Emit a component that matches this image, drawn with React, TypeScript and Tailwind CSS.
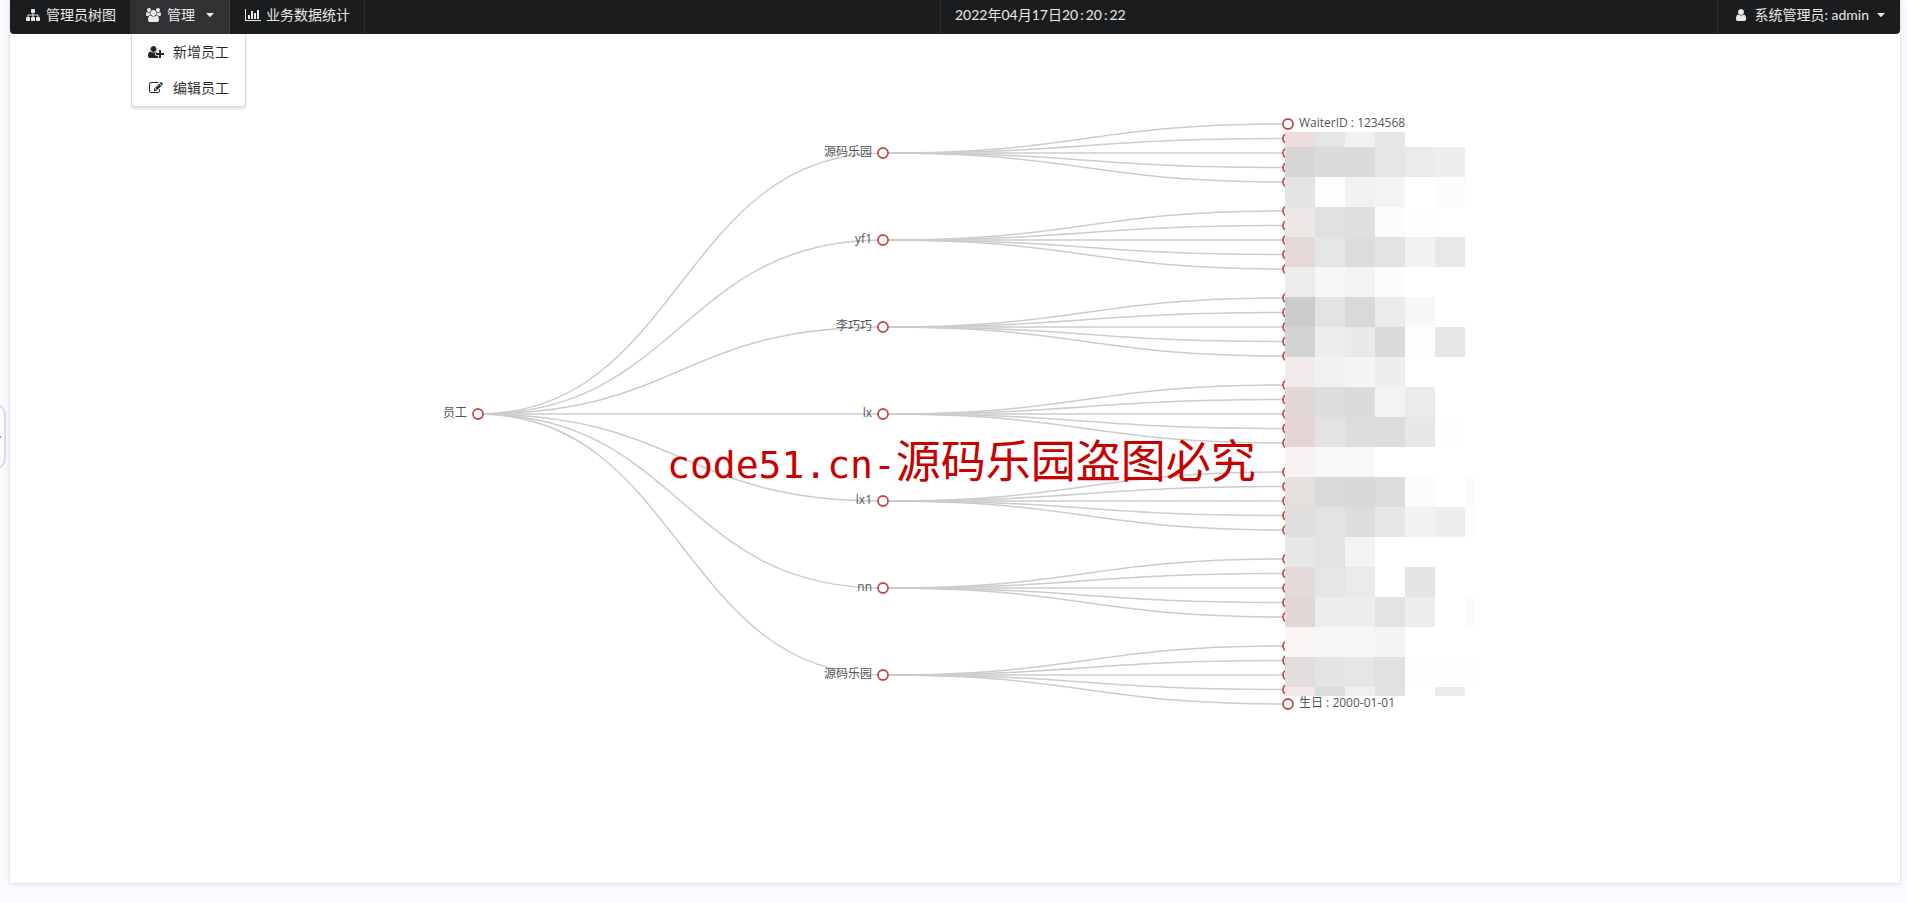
import type { ReactNode } from "react";

const ICONS = {
  sitemap: {
    width: 1792,
    d: "M1792 1248v320q0 40-28 68t-68 28h-320q-40 0-68-28t-28-68v-320q0-40 28-68t68-28h96v-192h-512v192h96q40 0 68 28t28 68v320q0 40-28 68t-68 28h-320q-40 0-68-28t-28-68v-320q0-40 28-68t68-28h96v-192h-512v192h96q40 0 68 28t28 68v320q0 40-28 68t-68 28h-320q-40 0-68-28t-28-68v-320q0-40 28-68t68-28h96v-192q0-52 38-90t90-38h512v-192h-96q-40 0-68-28t-28-68v-320q0-40 28-68t68-28h320q40 0 68 28t28 68v320q0 40-28 68t-68 28h-96v192h512q52 0 90 38t38 90v192h96q40 0 68 28t28 68z",
  },
  users: {
    width: 1920,
    d: "M593 896q-162 5-265 128h-134q-82 0-138-40.5t-56-118.5q0-353 124-353 6 0 43.5 21t97.5 42.5 119 21.5q67 0 133-23-5 37-5 66 0 139 81 256zm1071 637q0 120-73 189.5t-194 69.5h-874q-121 0-194-69.5t-73-189.5q0-53 3.5-103.5t14-109 26.5-108.5 43-97.5 62-81 85.5-53.5 111.5-20q10 0 43 21.5t73 48 107 48 135 21.5 135-21.5 107-48 73-48 43-21.5q61 0 111.5 20t85.5 53.5 62 81 43 97.5 26.5 108.5 14 109 3.5 103.5zm-1024-1277q0 106-75 181t-181 75-181-75-75-181 75-181 181-75 181 75 75 181zm704 384q0 159-112.5 271.5t-271.5 112.5-271.5-112.5-112.5-271.5 112.5-271.5 271.5-112.5 271.5 112.5 112.5 271.5zm576 225q0 78-56 118.5t-138 40.5h-134q-103-123-265-128 81-117 81-256 0-29-5-66 66 23 133 23 59 0 119-21.5t97.5-42.5 43.5-21q124 0 124 353zm-128-609q0 106-75 181t-181 75-181-75-75-181 75-181 181-75 181 75 75 181z",
  },
  chart: {
    width: 2048,
    d: "M640 896v512h-256v-512h256zm384-512v1024h-256v-1024h256zm1024 1152v128h-2048v-1536h128v1408h1920zm-640-896v768h-256v-768h256zm384-384v1152h-256v-1152h256z",
  },
  user: {
    width: 1280,
    d: "M1280 1399q0 109-62.5 187t-150.5 78h-854q-88 0-150.5-78t-62.5-187q0-85 8.5-160.5t31.5-152 58.5-131 94-89 134.5-34.5q131 128 313 128t313-128q76 0 134.5 34.5t94 89 58.5 131 31.5 152 8.5 160.5zm-256-887q0 159-112.5 271.5t-271.5 112.5-271.5-112.5-112.5-271.5 112.5-271.5 271.5-112.5 271.5 112.5 112.5 271.5z",
  },
  userPlus: {
    width: 2048,
    d: "M704 896q-159 0-271.5-112.5t-112.5-271.5 112.5-271.5 271.5-112.5 271.5 112.5 112.5 271.5-112.5 271.5-271.5 112.5zm960 128h352q13 0 22.5 9.5t9.5 22.5v192q0 13-9.5 22.5t-22.5 9.5h-352v352q0 13-9.5 22.5t-22.5 9.5h-192q-13 0-22.5-9.5t-9.5-22.5v-352h-352q-13 0-22.5-9.5t-9.5-22.5v-192q0-13 9.5-22.5t22.5-9.5h352v-352q0-13 9.5-22.5t22.5-9.5h192q13 0 22.5 9.5t9.5 22.5v352zm-736 224q0 52 38 90t90 38h256v238q-68 50-171 50h-874q-121 0-194-69t-73-190q0-53 3.5-103.5t14-109 26.5-108.5 43-97.5 62-81 85.5-53.5 111.5-20q19 0 39 17 79 61 154.5 91.5t164.5 30.5 164.5-30.5 154.5-91.5q20-17 39-17 132 0 217 96h-223q-52 0-90 38t-38 90v192z",
  },
  edit: {
    width: 1792,
    d: "M888 1184l116-116-152-152-116 116v56h96v96h56zm440-720q-16-16-33 1l-350 350q-17 17-1 33t33-1l350-350q17-17 1-33zm80 594v190q0 119-84.5 203.5t-203.5 84.5h-832q-119 0-203.5-84.5t-84.5-203.5v-832q0-119 84.5-203.5t203.5-84.5h832q63 0 117 25 15 7 18 23 3 17-9 29l-49 49q-14 14-32 8-23-6-45-6h-832q-66 0-113 47t-47 113v832q0 66 47 113t113 47h832q66 0 113-47t47-113v-126q0-13 9-22l64-64q15-15 35-7t20 29zm-96-738l288 288-672 672h-288v-288zm444 132l-92 92-288-288 92-92q28-28 68-28t68 28l152 152q28 28 28 68t-28 68z",
  },
};

function Icon({ name }: { name: keyof typeof ICONS }) {
  const { width, d } = ICONS[name];
  return (
    <span className="flex w-[17px] shrink-0 justify-center">
      <svg viewBox={`0 0 ${width} 1792`} className="h-[14px] w-auto" fill="currentColor" aria-hidden="true">
        <path d={d} />
      </svg>
    </span>
  );
}

function Caret({ className }: { className: string }) {
  return (
    <svg viewBox="0 0 10 6" className={`h-[6px] w-[10px] ${className}`} fill="currentColor" aria-hidden="true">
      <path d="M1 1h8L5 5.2z" />
    </svg>
  );
}

const navItem = "flex h-full items-center gap-[5px] whitespace-nowrap border-white/8 px-[14px] pb-[5px]";

function MenuLink({ icon, children }: { icon: keyof typeof ICONS; children: ReactNode }) {
  return (
    <a href="#" className="flex h-9 items-center gap-[9px] px-[15px] whitespace-nowrap text-black/85 hover:bg-black/5">
      <Icon name={icon} />
      {children}
    </a>
  );
}

function NavBar() {
  return (
    <nav className="flex h-[34px] rounded-b-[4px] bg-[#1b1c1d] text-sm text-white/90">
      <div className="flex w-[calc(50%-15px)]">
        <a href="#" className={`${navItem} border-r`}>
          <Icon name="sitemap" />
          管理员树图
        </a>
        <div className="relative">
          <button type="button" aria-expanded="true" className={`${navItem} border-r bg-[#303132]`}>
            <Icon name="users" />
            管理
            <Caret className="ml-[5px]" />
          </button>
          <div className="absolute top-full left-0 w-[115px] rounded-b-[4px] border border-t-0 border-[#d9dadb] bg-white shadow-[0_2px_3px_rgba(34,36,38,0.15)]">
            <MenuLink icon="userPlus">新增员工</MenuLink>
            <MenuLink icon="edit">编辑员工</MenuLink>
          </div>
        </div>
        <a href="#" className={`${navItem} border-r`}>
          <Icon name="chart" />
          业务数据统计
        </a>
      </div>
      <div className="flex flex-1 justify-between">
        <time className={`${navItem} border-l`}>
          <span>
            2022年04月17日20<span className="mx-[2px]">:</span>20<span className="mx-[2px]">:</span>22
          </span>
        </time>
        <button type="button" className={`${navItem} border-l`}>
          <Icon name="user" />
          系统管理员: admin
          <Caret className="ml-[2px]" />
        </button>
      </div>
    </nav>
  );
}

const ROOT = { x: 468, y: 380 };
const STAFF_X = 873;
const LEAF_X = 1278;
const STAFF = ["源码乐园", "yf1", "李巧巧", "lx", "lx1", "nn", "源码乐园"].map((name, i) => ({
  name,
  y: 119 + i * 87,
  leaves: [-2, -1, 0, 1, 2].map((k) => 119 + i * 87 + k * 14.5),
}));

// Redaction blocks laid over the private leaf labels, one list per row.
const BLOCKS: string[][] = [
  ["#eedddd", "#e5e5e5", "#f1f1f1", "#e5e5e5"],
  ["#d6d6d6", "#dbdbdb", "#dbdbdb", "#e5e5e5", "#eaeaea", "#ededed"],
  ["#e4e4e4", "#fdfdfd", "#f2f2f2", "#f4f4f4", "#ffffff", "#fcfcfc"],
  ["#ede8e8", "#e0e0e0", "#dfdfdf", "#fcfcfc", "#fefefe", "#ffffff"],
  ["#e4d9d7", "#e5e5e5", "#dcdcdc", "#e3e3e3", "#f2f2f2", "#e8e8e8"],
  ["#edebec", "#f7f7f7", "#f4f4f4", "#fcfcfc"],
  ["#cccccc", "#e3e3e3", "#d9d9d9", "#ebebeb", "#f7f7f7"],
  ["#d1d4d3", "#ededed", "#e9e9e9", "#dadada", "#fdfdfd", "#e7e7e7"],
  ["#f0eaea", "#f1f1f1", "#f5f5f5", "#eeeeee"],
  ["#e1d8d7", "#dddddd", "#dbdbdb", "#f3f3f3", "#ebebeb"],
  ["#e5d5d5", "#e3e3e3", "#dddddd", "#dcdcdc", "#e7e7e7", "#fefefe"],
  ["#f8f4f3", "#f8f8f8", "#f8f8f8", "#ffffff"],
  ["#e4e0dd", "#dadada", "#d8d8d8", "#dcdcdc", "#fcfcfc", "#ffffff", "#fafafa"],
  ["#dfdfdf", "#e3e3e3", "#dddddd", "#e7e7e7", "#f2f2f2", "#eeeeee", "#fdfdfd"],
  ["#e7e7e7", "#e3e3e3", "#f3f3f3", "#ffffff"],
  ["#e4dad9", "#e5e5e5", "#eaeaea", "#ffffff", "#e4e4e4"],
  ["#e1d7d4", "#eeeeee", "#eeeeee", "#e3e3e3", "#ededed", "#ffffff", "#fafafa"],
  ["#faf6f5", "#f6f6f6", "#f7f7f7", "#f3f3f3"],
  ["#e2dedd", "#e4e4e4", "#e5e5e5", "#e0e0e0", "#fefefe", "#fefefe", "#fefefe"],
  ["#f3e6e6", "#dcdcdc", "#efefef", "#e2e2e2", "#ffffff", "#ebebeb"],
];

function blockSpan(row: number) {
  if (row === 0) return { y: 98, height: 15 };
  const y = 113 + (row - 1) * 30;
  return { y, height: row === BLOCKS.length - 1 ? 9 : 30 };
}

function link(x1: number, y1: number, x2: number, y2: number) {
  const mid = (x1 + x2) / 2;
  return `M${x1} ${y1}C${mid} ${y1} ${mid} ${y2} ${x2} ${y2}`;
}

function Node({ x, y }: { x: number; y: number }) {
  return <circle cx={x} cy={y} r="5" fill="#fff" stroke="#b93a38" strokeOpacity="0.9" strokeWidth="1.8" />;
}

function StaffTree() {
  return (
    <svg viewBox="0 0 1890 849" className="block h-auto w-full" role="img" aria-label="员工">
      <g fill="none" stroke="#ccc" strokeWidth="1.5">
        {STAFF.map((s, i) => (
          <g key={i}>
            <path d={link(ROOT.x, ROOT.y, STAFF_X, s.y)} />
            {s.leaves.map((y) => (
              <path key={y} d={link(STAFF_X, s.y, LEAF_X, y)} />
            ))}
          </g>
        ))}
      </g>
      <Node x={ROOT.x} y={ROOT.y} />
      {STAFF.map((s, i) => (
        <g key={i}>
          <Node x={STAFF_X} y={s.y} />
          {s.leaves.map((y) => (
            <Node key={y} x={LEAF_X} y={y} />
          ))}
        </g>
      ))}
      <g className="font-['Open_Sans','Noto_Sans_CJK_SC',sans-serif] text-[12px]" fill="#555">
        <text x={ROOT.x - 11} y={ROOT.y + 3} textAnchor="end">员工</text>
        {STAFF.map((s, i) => (
          <text key={i} x={STAFF_X - 11} y={s.y + 3} textAnchor="end">{s.name}</text>
        ))}
        <text x={LEAF_X + 11} y="93">WaiterID : 1234568</text>
        <text x={LEAF_X + 11} y="673">生日 : 2000-01-01</text>
      </g>
      <g shapeRendering="crispEdges">
        {BLOCKS.map((row, r) => {
          const { y, height } = blockSpan(r);
          return (
            <g key={r}>
              <rect x="1275" y={y} width="190" height={height} fill="#fff" />
              {row.map((fill, c) => (
                <rect key={c} x={1275 + c * 30} y={y} width={c === 6 ? 10 : 30} height={height} fill={fill} />
              ))}
            </g>
          );
        })}
      </g>
      <text x="657" y="444" fill="#c80000">
        <tspan className="font-['DejaVu_Sans_Mono',monospace] text-[38px]">code51.cn-</tspan>
        <tspan className="font-['Noto_Sans_CJK_SC',sans-serif] text-[45px]">源码乐园盗图必究</tspan>
      </text>
    </svg>
  );
}

export default function App() {
  return (
    <div className="relative min-h-screen overflow-hidden bg-[#fafbfe] pr-[7px] pb-5 pl-[10px] font-[Lato,'Noto_Sans_CJK_SC',sans-serif]">
      <button
        type="button"
        aria-label="展开"
        className="absolute top-[403px] -left-[18px] flex h-[67px] w-6 items-center justify-end rounded-[12px] border-2 border-[#dddfe6] bg-[#fbfcff] pr-[3px]"
      >
        <span className="h-[2px] w-[2px] bg-[#8d90c4]" />
      </button>
      <main className="relative bg-white shadow-[0_0_2px_rgba(34,36,38,0.18),0_1px_8px_rgba(34,36,38,0.08)]">
        <NavBar />
        <StaffTree />
      </main>
    </div>
  );
}
